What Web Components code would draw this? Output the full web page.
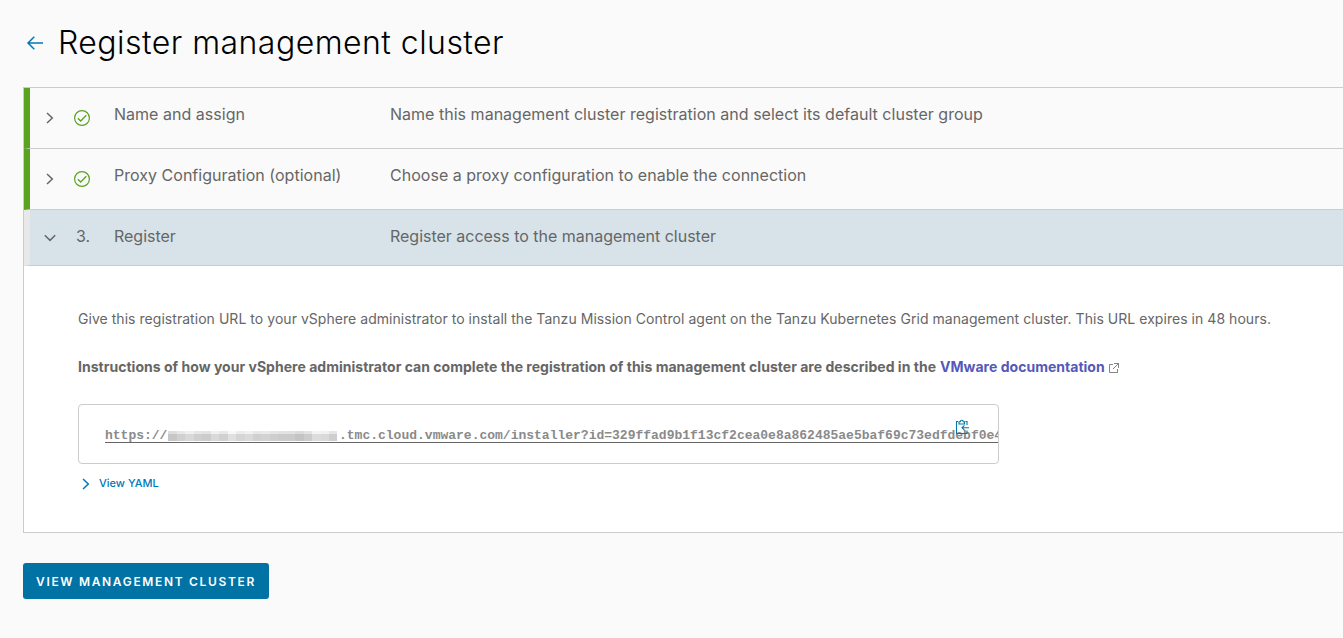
<!DOCTYPE html>
<html lang="en">
<head>
<meta charset="utf-8">
<title>Register management cluster</title>
<style>
html, body { margin: 0; height: 100%; background: #fafafa; overflow: hidden; }
body { font-family: Inter, "Liberation Sans", sans-serif; color: #666; }
</style>
</head>
<body>
<register-page></register-page>
<script>
const define = (name, html, setup) => customElements.define(name, class extends HTMLElement {
  connectedCallback() {
    if (this.shadowRoot) return;
    const root = this.attachShadow({ mode: 'open' });
    root.innerHTML = html;
    if (setup) setup(this, root);
  }
});

const icons = {
  back: '<svg width="18" height="16" viewBox="0 0 18 16"><path d="M17 8H2M8.3 1.8L2 8l6.3 6.2" stroke-width="1.5"/></svg>',
  right: '<svg width="8" height="12" viewBox="0 0 8 12"><path d="M1 1l5.3 5L1 11" stroke-width="1.5"/></svg>',
  down: '<svg width="12" height="8" viewBox="0 0 12 8"><path d="M.8 1.2L6 6.4l5.2-5.2" stroke-width="1.5"/></svg>',
  check: '<svg width="16" height="16" viewBox="0 0 16 16"><circle cx="8" cy="8" r="7.4" stroke-width="1.2"/><path d="M3.8 8.2l2.9 2.8 5.6-5.7" stroke-width="1.3"/></svg>',
  external: '<svg width="12" height="12" viewBox="0 0 12 12"><path d="M5 2.5H1.5v8h8V7M6 1.5h4.5V6M5 7l5.5-5.5" stroke-width=".8"/></svg>',
  clipboard: '<svg width="14" height="16" viewBox="0 0 14 16"><path d="M3 2.5H1.5v12H12v-3M10.500 2.500H12V6M4 5h5.500V2.800H8.300a1.500 1.500 0 0 0-3 0H4zM14 8.800H7.200M9.400 6.400L7 8.800l2.400 2.400" stroke-width="1.100"/></svg>'
};

define('ui-icon', `<style>
  :host { display: inline-flex; flex: none; }
  svg { display: block; fill: none; stroke: currentColor; }
</style><span></span>`, (el, root) => {
  root.querySelector('span').innerHTML = icons[el.getAttribute('name')];
});

define('page-heading', `<style>
  :host { display: flex; align-items: center; height: 87px; box-sizing: border-box; padding: 0 0 2px 26px; }
  ui-icon { color: #0079b8; }
  h1 { margin: 0 0 0 14px; font-weight: 300; font-size: 32px; line-height: 40px; letter-spacing: .46px; color: #000; white-space: nowrap; }
</style><ui-icon name="back"></ui-icon><h1><slot></slot></h1>`);

define('step-row', `<style>
  :host { display: flex; height: 60px; border-bottom: 1px solid #ccc; border-left: 6px solid #5aa220; font-size: 16px; line-height: 24px; letter-spacing: .02px; white-space: nowrap; }
  :host([active]) { height: 55px; border-left-color: #e8e8e8; background: #d8e3e9; letter-spacing: -.015px; }
  .caret { width: 40px; display: flex; justify-content: center; padding-top: 24px; box-sizing: border-box; }
  .mark { width: 24px; display: flex; justify-content: center; padding-top: 22px; color: #5aa220; box-sizing: border-box; }
  :host([active]) .mark { color: inherit; padding-top: 14px; width: 26px; }
  :host([active]) .title { margin-left: 18px; }
  .title { width: 276px; margin-left: 20px; padding-top: 14px; }
  .desc { padding-top: 14px; }
</style><div class="caret"></div><div class="mark"></div><div class="title"></div><div class="desc"><slot></slot></div>`, (el, root) => {
  const on = el.hasAttribute('active');
  root.querySelector('.caret').innerHTML = `<ui-icon name="${on ? 'down' : 'right'}"></ui-icon>`;
  root.querySelector('.mark').innerHTML = on ? el.getAttribute('step') + '.' : '<ui-icon name="check"></ui-icon>';
  root.querySelector('.title').textContent = el.getAttribute('label');
});

define('masked-text', `<style>
  :host { display: inline-flex; vertical-align: -2px; width: 169px; height: 10px; margin: 0 1.600px 0 1px; }
  i { flex: 1; }
</style>`, (el, root) => {
  const tones = [198, 208, 216, 207, 204, 217, 209, 224, 213, 218, 208, 211, 206, 203, 203, 196, 204, 220, 217, 206];
  for (const t of tones) {
    const cell = document.createElement('i');
    cell.style.background = `linear-gradient(rgb(${t + 24},${t + 24},${t + 24}) 30%, rgb(${t},${t},${t}) 30%)`;
    root.append(cell);
  }
});

define('url-box', `<style>
  :host { display: block; position: relative; width: 921px; height: 60px; box-sizing: border-box; border: 1px solid #ccc; border-radius: 4px; overflow: hidden; background: #fff; }
  .url { display: inline-block; margin: 22px 0 0 26px; height: 15px; border-bottom: 1px solid #666; font: 700 13px/17px "Liberation Mono", monospace; color: #8a8a8a; white-space: nowrap; }
  ui-icon { position: absolute; left: 876px; top: 14px; color: #0079a8; }
</style><div class="url"><slot></slot></div><ui-icon name="clipboard"></ui-icon>`);

define('yaml-toggle', `<style>
  :host { display: flex; align-items: center; gap: 9px; height: 20px; padding-left: 4px; color: #0079b8; font-size: 11px; font-weight: 500; }
  span { margin-bottom: 2px; }
</style><ui-icon name="right"></ui-icon><span><slot></slot></span>`);

define('primary-button', `<style>
  :host { display: block; }
  button { display: block; width: 246px; height: 36px; padding: 1px 0 0; border: 0; border-radius: 3px; background: #0072a3; color: #fff; font: 600 12px/35px Inter, sans-serif; letter-spacing: 1.66px; white-space: nowrap; }
</style><button><slot></slot></button>`);

define('register-panel', `<style>
  :host { display: block; height: 267px; box-sizing: border-box; padding: 43px 0 0 54px; background: #fff; border-bottom: 1px solid #ccc; font-size: 14px; line-height: 20px; white-space: nowrap; }
  p { margin: 0 0 28px; letter-spacing: .041px; }
  .strong { font-weight: 700; letter-spacing: .023px; display: flex; align-items: center; margin-bottom: 27px; }
  a { color: #5659b8; margin-left: 4px; text-decoration: none; }
  .strong ui-icon { margin: 2px 0 0 3px; }
  yaml-toggle { margin-top: 10px; }
</style>
<p>Give this registration URL to your vSphere administrator to install the Tanzu Mission Control agent on the Tanzu Kubernetes Grid management cluster. This URL expires in 48 hours.</p>
<p class="strong">Instructions of how your vSphere administrator can complete the registration of this management cluster are described in the <a>VMware documentation</a><ui-icon name="external"></ui-icon></p>
<url-box>https://<masked-text></masked-text>.tmc.cloud.vmware.com/installer?id=329ffad9b1f13cf2cea0e8a862485ae5baf69c73edfdebf0e4</url-box>
<yaml-toggle>View YAML</yaml-toggle>`);

define('register-page', `<style>
  :host { display: block; }
  .steps { margin-left: 23px; border-top: 1px solid #ccc; border-left: 1px solid #ccc; }
  primary-button { margin: 30px 0 0 23px; }
</style>
<page-heading>Register management cluster</page-heading>
<div class="steps">
  <step-row label="Name and assign">Name this management cluster registration and select its default cluster group</step-row>
  <step-row label="Proxy Configuration (optional)">Choose a proxy configuration to enable the connection</step-row>
  <step-row active step="3" label="Register">Register access to the management cluster</step-row>
  <register-panel></register-panel>
</div>
<primary-button>VIEW MANAGEMENT CLUSTER</primary-button>`);
</script>
</body>
</html>
